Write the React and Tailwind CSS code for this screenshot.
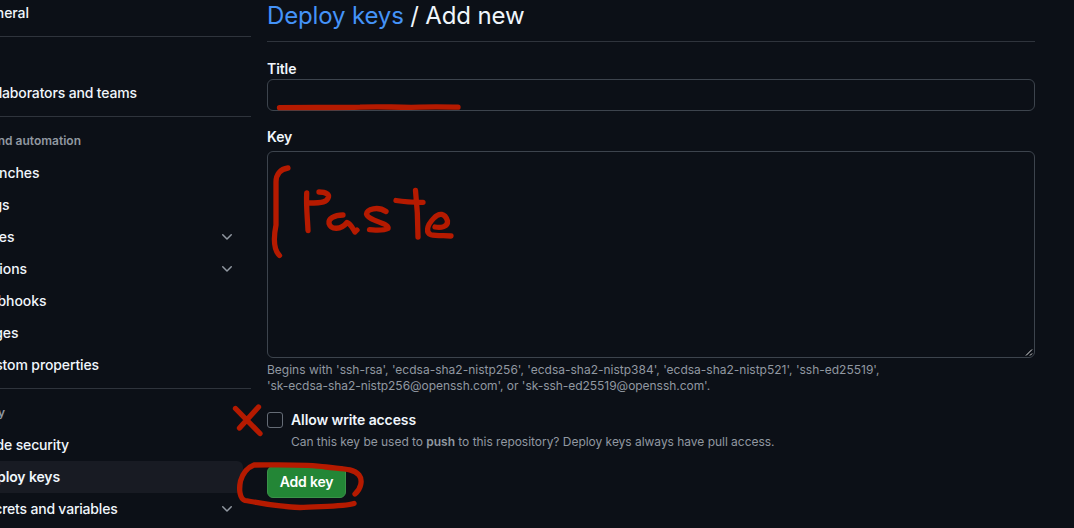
import React from "react";

function Chevron() {
  return (
    <svg width="16" height="16" viewBox="0 0 16 16" fill="#9198a1" className="shrink-0">
      <path d="M12.78 5.22a.749.749 0 0 1 0 1.06l-4.25 4.25a.749.749 0 0 1-1.06 0L3.22 6.28a.749.749 0 1 1 1.06-1.06L8 8.939l3.72-3.719a.749.749 0 0 1 1.06 0Z" />
    </svg>
  );
}

function Item({ label, w, open, active, track = "tracking-[-0.05px]" }) {
  return (
    <li
      className={
        "flex h-8 w-[243px] items-center justify-between pr-2 text-[14px] " +
        (active ? "rounded-r-md bg-[#181b23] font-semibold" : "font-[450]")
      }
    >
      <span className={"flex h-5 items-center justify-end pb-[2px] whitespace-nowrap " + w + " " + track}>{label}</span>
      {open && <Chevron />}
    </li>
  );
}

const Rule = ({ className = "" }) => <div className={"h-px w-[251px] bg-[#2f343c] " + className} />;

const Heading = ({ w, children }) => (
  <h3 className={"flex h-8 items-center justify-end whitespace-nowrap text-[12px] font-semibold text-[#9198a1] " + w}>
    {children}
  </h3>
);

function Annotations() {
  return (
    <svg
      className="pointer-events-none absolute inset-0"
      width="1074"
      height="528"
      fill="none"
      stroke="#b51a00"
      strokeWidth="5.3"
      strokeLinecap="round"
      strokeLinejoin="round"
    >
      <path d="M279.500 107.700C310 107.200 340 107.800 360 107.200C382 106 394 107.700 420 107.200C434 106.700 446 107 458 107.200" />
      <path d="M288 168C280 169 276 175 276 182V225C273 240 274 250 279.500 255.500" />
      <path d="M306.700 193C306 207 307.500 218 308 230.500M319 192C327 192 329 195 328.500 197C327 202 323 203 309 203" />
      <path d="M343 215C334 215 328 219 329 223.500C331 230 341 230 347 222.500C351 224 353 229 355 232L357 230" />
      <path d="M386 211.500C378 206 367 209 366.500 214C368 221 390 223 388 228.500C383 231 376 230 369.500 229.700" />
      <path d="M396 200.500C405 202 414 202.300 423 202.300M415.500 190.500C417 204 418 221 418 237" />
      <path d="M435 227C441 228 448 227 447.500 221C445 213 439 212.500 434 218C426 226 426 233 431 234.700C436 236 444 235.500 451 236" />
      <path d="M235.500 408.500L260 433.500M258.500 407L239.500 428" />
      <path d="M355 494C361 489 363 480 359 475C353 468 341 469 326 467C306 464 278 465 254 465C246 468 242 476 240.500 481C238.500 490 240 499 245 500.500C261 503 278 507 300 507.500C318 506 344 507 354 503.500" />
    </svg>
  );
}

export default function App() {
  return (
    <div className="relative flex h-[528px] w-[1074px] overflow-hidden bg-[#0c1017] font-[Inter,sans-serif] text-[#f0f6fc]">
      <nav className="w-[267px] shrink-0">
        <ul className="-mt-[3px]">
          <Item label="neral" w="w-[29px]" />
        </ul>
        <Rule className="mt-[7px]" />
        <ul className="mt-10">
          <Item label="laborators and teams" w="w-[137px]" track="tracking-[-0.15px]" />
        </ul>
        <Rule className="mt-[7px]" />
        <div className="pt-2">
          <Heading w="w-[81px]">nd automation</Heading>
          <ul>
            <Item label="nches" w="w-[39.5px]" />
            <Item label="gs" w="w-[9.5px]" />
            <Item label="es" w="w-[14.5px]" open />
            <Item label="ions" w="w-[27px]" open />
            <Item label="bhooks" w="w-[46.5px]" />
            <Item label="ges" w="w-[18.5px]" />
            <Item label="stom properties" w="w-[99px]" track="tracking-[-0.12px]" />
          </ul>
        </div>
        <Rule className="mt-[7px]" />
        <div className="pt-2">
          <Heading w="w-[5px]">y</Heading>
          <ul>
            <Item label="de security" w="w-[69px]" track="tracking-[-0.15px]" />
            <Item label="ploy keys" w="w-[60px]" active track="tracking-[-0.12px]" />
            <Item label="crets and variables" w="w-[117.5px]" open track="tracking-[-0.2px]" />
          </ul>
        </div>
      </nav>

      <main className="flex w-[768px] flex-col">
        <h1 className="flex h-[42px] shrink-0 items-start border-b border-[#2f343c] text-[24px] leading-8 tracking-[-0.15px] whitespace-pre">
          <a className="text-[#4493f8]">Deploy keys</a>
          <span> / Add new</span>
        </h1>
        <label className="mt-[17px] h-5 text-[14px] leading-5 font-semibold tracking-[-0.1px]">Title</label>
        <div className="h-8 shrink-0 rounded-md border border-[#3d444d]" />
        <label className="mt-4 h-6 shrink-0 text-[14px] leading-5 font-semibold tracking-[-0.1px]">Key</label>
        <div className="flex h-[207px] shrink-0 items-end justify-end rounded-md border border-[#3d444d]">
          <svg width="9" height="9" viewBox="0 0 9 9" stroke="#e0e0e0" strokeWidth="1">
            <path d="M1 7.500L7 1.500M5 7.500L7 5.500" />
          </svg>
        </div>
        <p className="mt-1 shrink-0 text-[12px] leading-4 whitespace-nowrap text-[#9198a1]">
          <span className="block">Begins with 'ssh-rsa', 'ecdsa-sha2-nistp256', 'ecdsa-sha2-nistp384', 'ecdsa-sha2-nistp521', 'ssh-ed25519',</span>
          <span className="block tracking-[-0.04px]">'sk-ecdsa-sha2-nistp256@openssh.com', or 'sk-ssh-ed25519@openssh.com'.</span>
        </p>
        <div className="mt-4 flex gap-2">
          <div className="mt-[2px] h-4 w-4 shrink-0 rounded-[3px] border border-[#656c76]" />
          <div className="whitespace-nowrap">
            <div className="text-[14px] leading-5 font-semibold tracking-[-0.1px]">Allow write access</div>
            <p className="mt-[2px] text-[12px] leading-5 tracking-[-0.03px] text-[#9198a1]">
              Can this key be used to <strong className="font-semibold">push</strong> to this repository? Deploy keys always have pull access.
            </p>
          </div>
        </div>
        <button className="mt-[14px] h-8 w-[79px] shrink-0 rounded-md border border-[#3a9249] bg-[#238636] pb-[2px] text-[14px] font-semibold tracking-[-0.2px] whitespace-nowrap text-white">
          Add key
        </button>
      </main>
      <Annotations />
    </div>
  );
}
